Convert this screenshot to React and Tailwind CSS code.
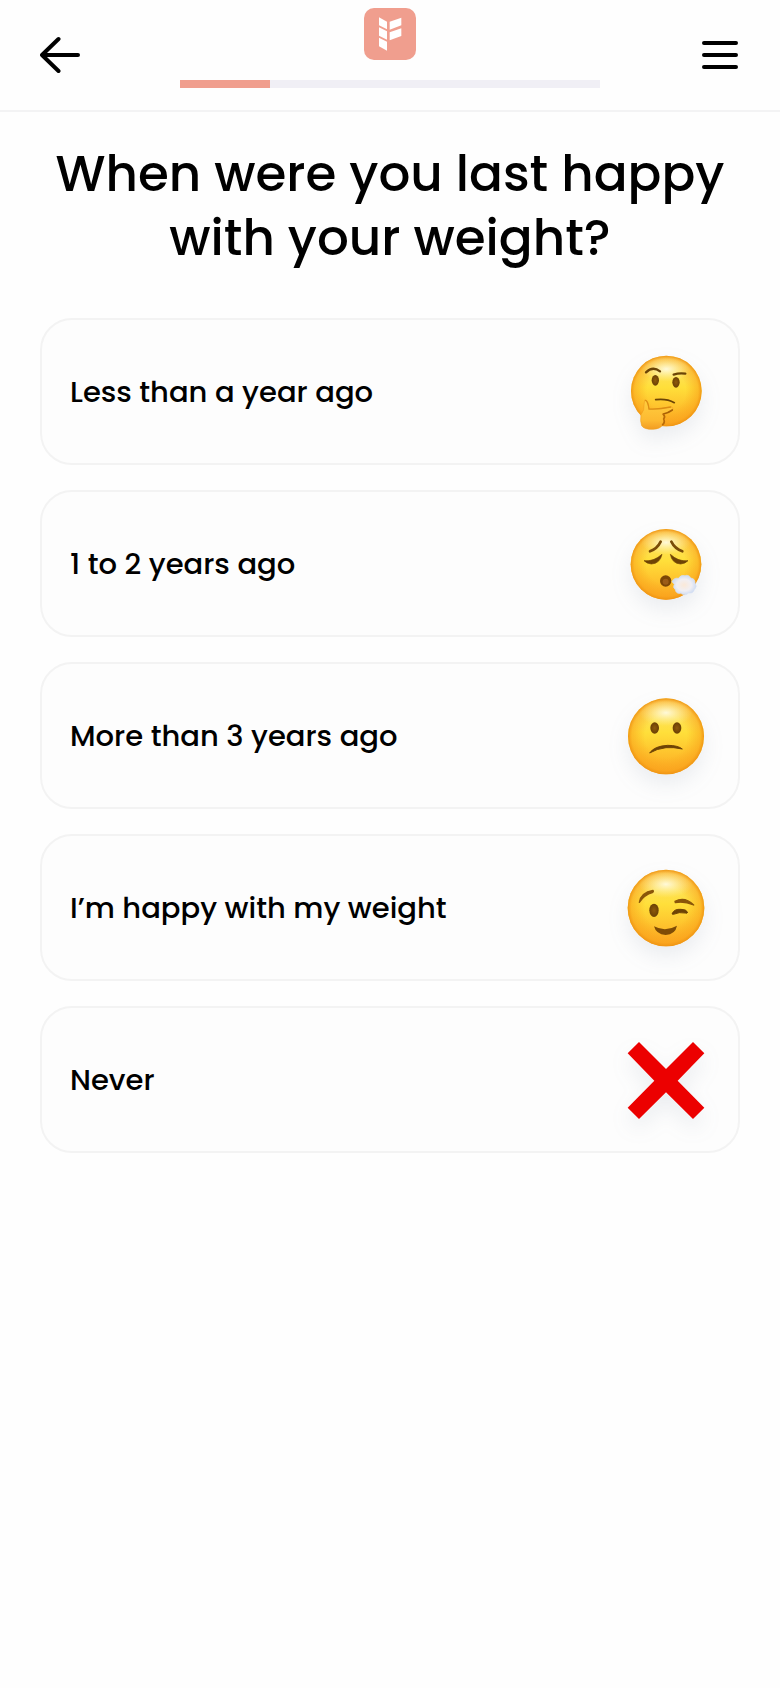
import { useState } from 'react';

const STEP = 3;
const TOTAL_STEPS = 14;

const Logo = () => (
  <svg viewBox="0 0 156 156" className="w-[52px] h-[52px]" role="img" aria-label="Logo">
    <rect width="156" height="156" rx="30" fill="#f09e8e" />
    <g fill="#fff">
      <path d="M45 28 L69 41 V64 L45 52 Z" />
      <path d="M45 58 L69 70 V95 L45 83 Z" />
      <path d="M45 89 L69 101 V128 L45 115 Z" />
      <path d="M77 41 L112 29 V52 L77 65 Z" />
      <path d="M77 73 L112 61 V84 L77 97 Z" />
    </g>
  </svg>
);

// Shared gradients for all the faces
const FaceGradients = () => (
  <svg className="absolute w-0 h-0" aria-hidden="true">
    <defs>
      <linearGradient id="faceBase" x1="0" y1="0" x2="0" y2="1">
        <stop offset="0" stopColor="#fde47a" />
        <stop offset="0.45" stopColor="#ffdf3a" />
        <stop offset="0.75" stopColor="#fec02c" />
        <stop offset="1" stopColor="#fca722" />
      </linearGradient>
      <radialGradient id="faceRim" cx="0.5" cy="0.5" r="0.5">
        <stop offset="0.55" stopColor="#f9a01a" stopOpacity="0" />
        <stop offset="0.9" stopColor="#f9a01a" stopOpacity="0.55" />
        <stop offset="1" stopColor="#ee9312" stopOpacity="0.95" />
      </radialGradient>
      <radialGradient id="faceShine" cx="0.5" cy="0.5" r="0.5">
        <stop offset="0" stopColor="#fffbe0" stopOpacity="0.95" />
        <stop offset="1" stopColor="#fff2a0" stopOpacity="0" />
      </radialGradient>
      <linearGradient id="handFill" x1="0" y1="0" x2="0" y2="1">
        <stop offset="0" stopColor="#ffcf40" />
        <stop offset="0.7" stopColor="#fdb931" />
        <stop offset="1" stopColor="#f29c22" />
      </linearGradient>
      <radialGradient id="eyeFill" cx="0.5" cy="0.5" r="0.5">
        <stop offset="0" stopColor="#8f5a0c" />
        <stop offset="1" stopColor="#6b4004" />
      </radialGradient>
      <radialGradient id="puffFill" cx="0.5" cy="0.5" r="0.5">
        <stop offset="0" stopColor="#fbe9d8" />
        <stop offset="0.6" stopColor="#f1eff3" />
        <stop offset="1" stopColor="#cfdcf2" />
      </radialGradient>
    </defs>
  </svg>
);

const Face = ({ cx, cy, r }) => (
  <>
    <circle cx={cx} cy={cy} r={r} fill="url(#faceBase)" />
    <circle cx={cx} cy={cy} r={r} fill="url(#faceRim)" />
    <ellipse cx={cx} cy={cy - r * 0.62} rx={r * 0.7} ry={r * 0.35} fill="url(#faceShine)" />
  </>
);

const iconClass = 'w-24 h-24 shrink-0 drop-shadow-[0_10px_10px_rgba(90,110,140,0.11)]';

const Thinking = () => (
  <svg viewBox="54 40 288 288" className={iconClass} aria-hidden="true">
    <Face cx={199} cy={181} r={106} />
    <g fill="none" stroke="#6b4406" strokeLinecap="round">
      <path d="M138 125 Q158 105 180 122" strokeWidth="7" />
      <path d="M221 132 Q238 126 256 129" strokeWidth="7" />
      <path d="M167 207 Q200 203 223 216" strokeWidth="5" />
    </g>
    <ellipse cx="166" cy="149" rx="11" ry="16" fill="url(#eyeFill)" />
    <ellipse cx="228" cy="155" rx="11" ry="16" fill="url(#eyeFill)" />
    <path
      d="M134 208 Q144 208 147 235 Q175 237 211 229 Q222 229 217 238 Q205 247 190 250 Q197 258 191 265 Q196 275 188 282 Q183 294 158 296 Q131 296 125 285 Q120 270 123 252 Q134 238 132 222 Z"
      fill="url(#handFill)"
      stroke="#f0a01f"
      strokeWidth="2"
    />
    {/* thumb edge, finger underside, knuckles */}
    <g fill="none" strokeLinecap="round">
      <path d="M137 209 Q144 212 147 235 Q175 237 212 229" stroke="#dc8d14" strokeWidth="4" />
      <path d="M217 238 Q205 247 190 250" stroke="#a86006" strokeWidth="5" />
      <path d="M190 251 Q197 258 191 265 Q196 275 188 282" stroke="#b96a08" strokeWidth="5" />
    </g>
  </svg>
);

const Exhaling = () => (
  <svg viewBox="54 46 288 288" className={iconClass} aria-hidden="true">
    <Face cx={198} cy={191} r={106} />
    <g fill="none" stroke="#7a4c07" strokeLinecap="round">
      <path d="M150 152 Q172 144 182 123" strokeWidth="8" />
      <path d="M214 123 Q224 144 247 152" strokeWidth="8" />
    </g>
    <g fill="#6e4305" stroke="#6e4305" strokeWidth="2" strokeLinejoin="round">
      <path d="M132 180 Q160 184 186 161 Q180 189 154 190 Q140 189 132 180 Z" />
      <path d="M264 180 Q236 184 211 161 Q216 189 242 190 Q256 189 264 180 Z" />
    </g>
    <circle cx="197" cy="241" r="17" fill="#7c4606" />
    <circle cx="197" cy="243" r="9" fill="#9c5c18" />
    <path
      d="M216 243 Q222 230 235 233 Q243 221 255 225 Q267 221 272 232 Q286 234 285 247 Q293 258 283 267 Q279 279 266 277 Q254 287 242 278 Q228 280 226 267 Q217 261 223 251 Z"
      fill="url(#puffFill)"
      stroke="#d5e0f3"
      strokeWidth="2"
    />
  </svg>
);

const Confused = () => (
  <svg viewBox="54 52 288 288" className={iconClass} aria-hidden="true">
    <Face cx={198} cy={197} r={114} />
    <ellipse cx="164" cy="172" rx="13" ry="17" fill="url(#eyeFill)" />
    <ellipse cx="231" cy="172" rx="13" ry="17" fill="url(#eyeFill)" />
    <path
      d="M149 247 Q163 226 203 224 Q233 224 247 235 Q220 229 198 231 Q170 234 149 247 Z"
      fill="#6e4305"
      stroke="#6e4305"
      strokeWidth="3"
      strokeLinejoin="round"
    />
  </svg>
);

const Winking = () => (
  <svg viewBox="54 58 288 288" className={iconClass} aria-hidden="true">
    <Face cx={198} cy={202} r={115} />
    <g fill="#8a560a" stroke="#8a560a" strokeWidth="4" strokeLinejoin="round">
      <path d="M118 185 Q123 155 159 149 Q162 153 157 156 Q134 162 118 185 Z" />
      <path d="M225 182 Q254 166 281 193 Q253 181 226 186 Z" />
    </g>
    <ellipse cx="162" cy="209" rx="14" ry="20" fill="url(#eyeFill)" />
    <path
      d="M216 220 Q222 204 243 206 Q259 206 263 215 Q262 219 256 217 Q238 213 220 221 Z"
      fill="#6e4305"
      stroke="#6e4305"
      strokeWidth="3"
      strokeLinejoin="round"
    />
    <path d="M162 257 Q196 275 231 255 Q226 281 197 283 Q168 281 162 257 Z" fill="#7f4c06" />
  </svg>
);

const Cross = () => (
  <svg viewBox="54 64 288 288" className={iconClass} aria-hidden="true">
    <path
      d="M117 94 L198 175 L279 94 L313 128 L233 210 L313 291 L279 325 L198 245 L117 325 L83 291 L163 210 L83 128 Z"
      fill="#ec0000"
    />
  </svg>
);

const options = [
  { id: 'less-than-year', label: 'Less than a year ago', Icon: Thinking },
  { id: 'one-to-two', label: '1 to 2 years ago', Icon: Exhaling },
  { id: 'three-plus', label: 'More than 3 years ago', Icon: Confused },
  { id: 'happy-now', label: 'I’m happy with my weight', Icon: Winking },
  { id: 'never', label: 'Never', Icon: Cross }
];

const Header = () => (
  <header className="flex items-center h-28 px-10 border-b-2 border-[#f3f3f4]">
    <button type="button" aria-label="Back" className="w-10 h-10 shrink-0">
      <svg viewBox="0 0 40 40" className="w-10 h-10" fill="none" stroke="#000" strokeWidth="4" strokeLinecap="round" strokeLinejoin="round">
        <path d="M38 20 H2 M18.5 4 L2 20 L18.5 36" />
      </svg>
    </button>

    {/* Logo and progress */}
    <div className="flex flex-col items-center self-start flex-1 gap-5 pt-2 mx-[100px]">
      <Logo />
      <div
        role="progressbar"
        aria-label="Quiz progress"
        aria-valuenow={STEP}
        aria-valuemin={0}
        aria-valuemax={TOTAL_STEPS}
        className="w-full h-2 bg-[#f0eff5]"
      >
        <div className="h-full bg-[#f09e8e]" style={{ width: `${(STEP / TOTAL_STEPS) * 100}%` }} />
      </div>
    </div>

    <button type="button" aria-label="Menu" className="w-10 h-10 shrink-0">
      <svg viewBox="0 0 40 40" className="w-10 h-10" stroke="#000" strokeWidth="4" strokeLinecap="round">
        <path d="M4 8 H36 M4 20 H36 M4 32 H36" />
      </svg>
    </button>
  </header>
);

export default function App() {
  const [selected, setSelected] = useState(null);

  return (
    <div className="min-h-screen bg-[#fefefe] text-black font-['Poppins','Inter',sans-serif]">
      <FaceGradients />
      <Header />

      <main className="px-10 pt-[30px] pb-10">
        <h1 className="text-[50px] leading-[64px] font-medium text-center">
          When were you last happy with your weight?
        </h1>

        <div className="flex flex-col gap-[25px] mt-12">
          {options.map(({ id, label, Icon }) => (
            <button
              key={id}
              type="button"
              aria-pressed={selected === id}
              onClick={() => setSelected(id)}
              className="flex items-center justify-between w-full h-[147px] pl-7 pr-6 bg-[#fdfdfd] border-2 border-[#f3f3f3] rounded-[32px] text-left"
            >
              <span className="text-[29px] leading-10 font-medium">{label}</span>
              <Icon />
            </button>
          ))}
        </div>
      </main>
    </div>
  );
}
